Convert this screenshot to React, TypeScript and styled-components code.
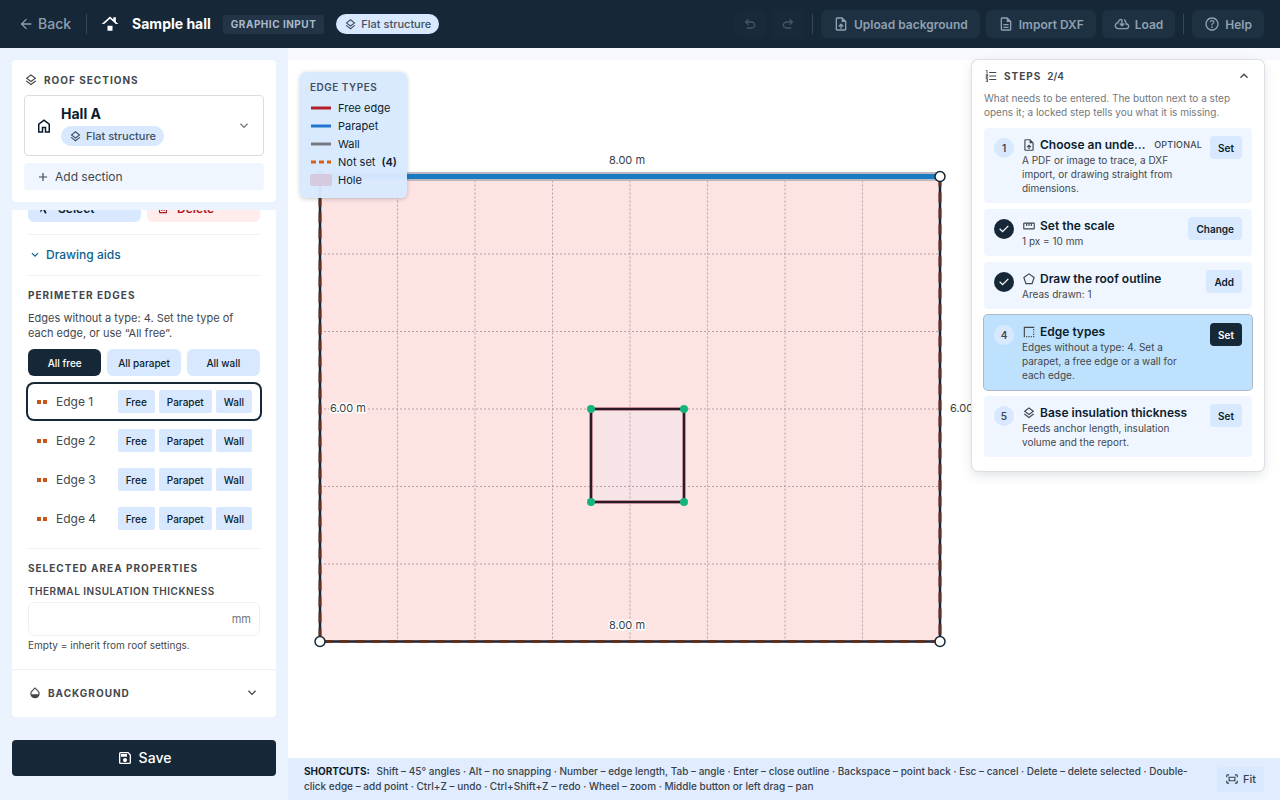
import React from "react";
import styled, { createGlobalStyle, css } from "styled-components";

const GlobalStyle = createGlobalStyle`
  *, *::before, *::after { box-sizing: border-box; }
  body {
    margin: 0;
    background: #f8f9ff;
    color: #0b1d2d;
    font-family: Inter, "Liberation Sans", sans-serif;
    font-size: 12px;
  }
  button, input { font: inherit; color: inherit; border: 0; margin: 0; }
  button { cursor: pointer; white-space: nowrap; }
  h1, h2, h3, p, ul, ol { margin: 0; padding: 0; font: inherit; list-style: none; }
`;

const DOC =
  "M240-80q-33 0-56.5-23.5T160-160v-640q0-33 23.5-56.5T240-880h320l240 240v480q0 33-23.5 56.5T720-80H240Zm280-520v-200H240v640h480v-440H520Z";

const paths = {
  back: "m313-440 224 224-57 56-320-320 320-320 57 56-224 224h487v80H313Z",
  roof: "M360-400h240v240H360v-240Zm400-188v-212H640v104L480-840 80-480h120l280-252 280 252h120L760-588Z",
  layers:
    "M480-118 120-398l66-50 294 228 294-228 66 50-360 280Zm0-202L120-600l360-280 360 280-360 280Zm0-102 230-178-230-178-230 178 230 178Z",
  undo: "M280-200v-80h284q63 0 109.5-40T720-420q0-60-46.5-100T564-560H312l104 104-56 56-200-200 200-200 56 56-104 104h252q97 0 166.5 63T800-420q0 94-69.5 157T564-200H280Z",
  redo: "M396-200q-97 0-166.5-63T160-420q0-94 69.5-157T396-640h252L544-744l56-56 200 200-200 200-56-56 104-104H396q-63 0-109.5 40T240-420q0 60 46.5 100T396-280h284v80H396Z",
  upload: "M440-200h80v-167l64 64 56-57-160-160-160 160 57 56 63-63v167Z" + DOC,
  document: "M320-240h320v-80H320v80Zm0-160h320v-80H320v80Z" + DOC,
  cloud:
    "M260-160q-91 0-155.5-63T40-377q0-78 47-139t123-78q17-72 85-137t145-65q33 0 56.5 23.5T520-716v242l64-62 56 56-160 160-160-160 56-56 64 62v-242q-76 14-118 73.5T280-520h-20q-58 0-99 41t-41 99q0 58 41 99t99 41h480q42 0 71-29t29-71q0-42-29-71t-71-29h-60v-80q0-48-22-89.5T600-680v-93q74 35 117 103.5T760-520q69 8 114.5 59.5T920-340q0 75-52.5 127.5T740-160H260Z",
  help: "M478-240q21 0 35.5-14.5T528-290q0-21-14.5-35.5T478-340q-21 0-35.5 14.5T428-290q0 21 14.5 35.5T478-240Zm-36-154h74q0-33 7.5-52t42.5-52q26-26 41-49.5t15-56.5q0-56-41-86t-97-30q-57 0-92.5 30T342-618l66 26q5-18 22.5-39t53.5-21q32 0 48 17.5t16 38.5q0 20-12 37.5T506-526q-44 39-54 59t-10 73Zm38 314q-83 0-156-31.5T197-197q-54-54-85.5-127T80-480q0-83 31.5-156T197-763q54-54 127-85.5T480-880q83 0 156 31.5T763-763q54 54 85.5 127T880-480q0 83-31.5 156T763-197q-54 54-127 85.5T480-80Zm0-80q134 0 227-93t93-227q0-134-93-227t-227-93q-134 0-227 93t-93 227q0 134 93 227t227 93Z",
  home: "M240-200h120v-240h240v240h120v-360L480-740 240-560v360Zm-80 80v-480l320-240 320 240v480H520v-240h-80v240H160Z",
  more: "M480-344 240-584l56-56 184 184 184-184 56 56-240 240Z",
  less: "M480-528 296-344l-56-56 240-240 240 240-56 56-184-184Z",
  add: "M440-440H200v-80h240v-240h80v240h240v80H520v240h-80v-240Z",
  cursor: "M551-80 406-392 240-160v-720l560 440H516l144 309-109 51Z",
  trash:
    "M280-120q-33 0-56.5-23.5T200-200v-520h-40v-80h200v-40h240v40h200v80h-40v520q0 33-23.5 56.5T680-120H280Zm400-600H280v520h400v-520ZM360-280h80v-360h-80v360Zm160 0h80v-360h-80v360Z",
  drop: "M480-120q-133 0-226.5-92T160-436q0-65 25-121.5T254-658l226-222 226 222q44 44 69 100.5T800-436q0 132-93.5 224T480-120ZM242-400h474q12-72-13.5-123T650-600L480-768 310-600q-27 26-53 77t-15 123Z",
  save: "M840-680v480q0 33-23.5 56.5T760-120H200q-33 0-56.5-23.5T120-200v-560q0-33 23.5-56.5T200-840h480l160 160Zm-80 34L646-760H200v560h560v-446ZM480-240q50 0 85-35t35-85q0-50-35-85t-85-35q-50 0-85 35t-35 85q0 50 35 85t85 35ZM240-560h360v-160H240v160Z",
  list: "M120-80v-60h100v-30h-60v-60h60v-30H120v-60h120q17 0 28.5 11.5T280-280v40q0 17-11.5 28.5T240-200q17 0 28.5 11.5T280-160v40q0 17-11.5 28.5T240-80H120Zm0-280v-110q0-17 11.5-28.5T160-510h60v-30H120v-60h120q17 0 28.5 11.5T280-560v70q0 17-11.5 28.5T240-450h-60v30h100v60H120Zm60-280v-180h-60v-60h120v240h-60Zm180 440v-80h480v80H360Zm0-240v-80h480v80H360Zm0-240v-80h480v80H360Z",
  check: "M382-240 154-468l57-57 171 171 367-367 57 57-424 424Z",
  ruler:
    "M160-240q-33 0-56.5-23.5T80-320v-320q0-33 23.5-56.5T160-720h640q33 0 56.5 23.5T880-640v320q0 33-23.5 56.5T800-240H160Zm0-80h640v-320H680v160h-80v-160h-80v160h-80v-160h-80v160h-80v-160H160v320Z",
  pentagon:
    "M298-200h364l123-369-305-213-305 213 123 369Zm-58 80L80-600l400-280 400 280-160 480H240Z",
  border:
    "M120-120v-720h720v80H200v640h-80Zm160 0v-80h80v80h-80Zm160 0v-80h80v80h-80Zm160 0v-80h80v80h-80Zm160 0v-80h80v80h-80Zm0-160v-80h80v80h-80Zm0-160v-80h80v80h-80Zm0-160v-80h80v80h-80Z",
  fit: "M800-600v-120H680v-80h120q33 0 56.5 23.5T880-720v120h-80Zm-720 0v-120q0-33 23.5-56.5T160-800h120v80H160v120H80Zm600 440v-80h120v-120h80v120q0 33-23.5 56.5T800-160H680Zm-520 0q-33 0-56.5-23.5T80-240v-120h80v120h120v80H160Zm80-160v-320h480v320H240Zm80-80h320v-160H320v160Z",
};

type IconName = keyof typeof paths;

const Svg = styled.svg`
  display: block;
  flex: none;
  fill: currentColor;
`;

function Icon({ name, size = 14 }: { name: IconName; size?: number }) {
  return (
    <Svg viewBox="0 -960 960 960" width={size} height={size} aria-hidden="true">
      <path d={paths[name]} />
    </Svg>
  );
}

const Page = styled.div`
  display: flex;
  flex-direction: column;
  height: 100vh;
  overflow: hidden;
`;

/* Top bar */

const TopBar = styled.header`
  display: flex;
  align-items: center;
  flex: none;
  height: 48px;
  padding: 0 16px;
  background: #162737;
  color: #fff;
`;

const BackLink = styled.a`
  display: flex;
  align-items: center;
  gap: 4px;
  padding: 0 2px;
  color: #8ea0b2;
  font-size: 14px;
  font-weight: 500;
  line-height: 16px;
  text-decoration: none;
`;

const Divider = styled.span<{ $gap: number }>`
  width: 1px;
  height: 20px;
  margin: 0 ${(p) => p.$gap}px;
  background: #34485b;
`;

const ProjectName = styled.h1`
  margin: 0 12px;
  font-size: 14px;
  font-weight: 700;
  line-height: 16px;
`;

const ModeTag = styled.span`
  padding: 0 8px;
  border-radius: 2px;
  background: #223446;
  color: #a9bacb;
  font-size: 10px;
  font-weight: 700;
  line-height: 19px;
  letter-spacing: 0.5px;
`;

const Pill = styled.span<{ $spaced?: boolean }>`
  display: inline-flex;
  align-items: center;
  gap: 4px;
  height: 20px;
  margin-left: ${(p) => (p.$spaced ? 12 : 0)}px;
  padding: 0 8px;
  border-radius: 10px;
  background: #d8e8fe;
  color: #41505f;
  font-size: 11px;
  font-weight: 500;
`;

const TopActions = styled.div`
  display: flex;
  align-items: center;
  gap: 6px;
  margin-left: auto;
`;

const TopButton = styled.button<{ $square?: boolean }>`
  display: flex;
  align-items: center;
  justify-content: center;
  gap: 5px;
  height: 28px;
  padding: 0 12px;
  border-radius: 6px;
  background: #1e3143;
  color: #8ea0b2;
  font-size: 12px;
  font-weight: 600;
  ${(p) =>
    p.$square &&
    css`
      width: 32px;
      padding: 0;
      background: #182a3a;
      color: #43566a;
    `}
`;

/* Sidebar */

const Body = styled.div`
  display: flex;
  flex: 1;
  min-height: 0;
`;

const Sidebar = styled.aside`
  display: flex;
  flex-direction: column;
  flex: none;
  width: 288px;
  padding: 12px 12px 24px;
  background: #ebf3fe;
`;

const SectionsCard = styled.section`
  display: flex;
  flex-direction: column;
  flex: none;
  gap: 7px;
  margin-bottom: 8px;
  padding: 12px;
  border-radius: 4px;
  background: #fff;
`;

const CardTitle = styled.h2`
  display: flex;
  align-items: center;
  gap: 6px;
  height: 16px;
  color: #43474c;
  font-size: 10px;
  font-weight: 700;
  line-height: 14px;
  letter-spacing: 1px;
`;

const SectionSelect = styled.button`
  display: flex;
  align-items: center;
  gap: 8px;
  height: 61px;
  padding: 0 11px 0 10px;
  border: 1px solid #d9dde2;
  border-radius: 4px;
  background: #fff;
  text-align: left;
`;

const SectionText = styled.span`
  display: flex;
  flex-direction: column;
  align-items: flex-start;
  gap: 3px;
  flex: 1;
  font-size: 14px;
  font-weight: 700;
  line-height: 18px;
`;

const Muted = styled.span`
  color: #6b737b;
`;

const AddSection = styled.button`
  display: flex;
  align-items: center;
  gap: 5px;
  height: 27px;
  padding: 0 12px;
  border-radius: 4px;
  background: #f0f6ff;
  color: #43474c;
  font-size: 12px;
`;

/* The tool panel is pinned to its end, so its first rows slide under the card above. */
const ToolPanel = styled.section`
  display: flex;
  flex-direction: column;
  justify-content: flex-end;
  flex: 0 1 auto;
  min-height: 0;
  margin-bottom: 23px;
  overflow: hidden;
  border-radius: 0 0 4px 4px;
  background: #fff;
`;

const PanelGroup = styled.div<{ $last?: boolean }>`
  display: flex;
  flex-direction: column;
  flex: none;
  margin: 0 16px;
  padding: 12px 0 ${(p) => (p.$last ? 17 : 12)}px;
  border-bottom: ${(p) => (p.$last ? 0 : 1)}px solid #f0f2f5;
`;

const ButtonRow = styled.div`
  display: flex;
  gap: 6px;
`;

const ToolButton = styled.button<{ $danger?: boolean }>`
  display: flex;
  align-items: center;
  gap: 7px;
  flex: 1;
  height: 28px;
  padding: 0 9px;
  border-radius: 6px;
  background: ${(p) => (p.$danger ? "#ffeceb" : "#d8e8fe")};
  color: ${(p) => (p.$danger ? "#ac1820" : "#0b1d2d")};
  font-size: 12px;
  font-weight: 600;
`;

const AidsToggle = styled.button`
  display: flex;
  align-items: center;
  gap: 4px;
  height: 16px;
  padding: 0;
  background: none;
  color: #0b628f;
  font-size: 12px;
  font-weight: 500;
  line-height: 14px;
`;

const GroupTitle = styled.h2`
  color: #43474c;
  font-size: 10px;
  font-weight: 700;
  line-height: 15px;
  letter-spacing: 1px;
`;

const Hint = styled.p`
  margin: 8px 0;
  color: #43474c;
  font-size: 11px;
  line-height: 15px;
`;

const AllButton = styled.button<{ $active?: boolean }>`
  flex: 1;
  height: 27px;
  padding: 0;
  border-radius: 6px;
  background: ${(p) => (p.$active ? "#162737" : "#d8e8fe")};
  color: ${(p) => (p.$active ? "#fff" : "#0b1d2d")};
  font-size: 10px;
  font-weight: 500;
`;

const EdgeList = styled.ul`
  display: flex;
  flex-direction: column;
  gap: 4px;
  margin-top: 8px;
`;

const EdgeRow = styled.li<{ $active?: boolean }>`
  display: flex;
  align-items: center;
  gap: 4px;
  padding: 6px 8px;
  border-radius: 6px;
  color: #43474c;
  font-size: 12px;
  ${(p) => p.$active && "box-shadow: 0 0 0 2px #162737;"}
`;

const EdgeName = styled.span`
  flex: 1;
  padding-left: 4px;
`;

const EdgeChip = styled.button`
  height: 23px;
  padding: 0 8px;
  border-radius: 2px;
  background: #d8e8fe;
  color: #0b1d2d;
  font-size: 10px;
  font-weight: 500;
`;

const FieldLabel = styled.label`
  margin-top: 8px;
  color: #43474c;
  font-size: 10px;
  font-weight: 600;
  line-height: 15px;
  letter-spacing: 0.5px;
`;

const Field = styled.div`
  display: flex;
  align-items: center;
  height: 34px;
  margin-top: 3px;
  padding: 0 8px;
  border: 1px solid #eef0f4;
  border-radius: 6px;
  color: #6f767d;
  font-size: 11px;
`;

const FieldInput = styled.input`
  flex: 1;
  min-width: 0;
  background: none;
  outline: none;
`;

const SmallNote = styled.p`
  margin-top: 2px;
  color: #43474c;
  font-size: 10px;
  line-height: 14px;
`;

const BackgroundToggle = styled.button`
  display: flex;
  align-items: center;
  justify-content: space-between;
  flex: none;
  height: 48px;
  padding: 0 16px 2px;
  border-top: 1px solid #eaf1f6;
  background: none;
  color: #43474c;
`;

const SaveButton = styled.button`
  display: flex;
  align-items: center;
  justify-content: center;
  gap: 6px;
  flex: none;
  height: 36px;
  margin-top: auto;
  border-radius: 4px;
  background: #162737;
  color: #fff;
  font-size: 14px;
  font-weight: 500;
  line-height: 16px;
`;

/* Canvas */

const Main = styled.main`
  display: flex;
  flex-direction: column;
  flex: 1;
  min-width: 0;
  padding-top: 12px;
`;

const Canvas = styled.div`
  position: relative;
  flex: 1;
  min-height: 0;
  background: #fff;
`;

const Drawing = styled.svg`
  display: block;
  width: 100%;
  height: 100%;
  text {
    fill: #3a3e43;
    stroke: #fff;
    stroke-width: 3px;
    stroke-linejoin: round;
    paint-order: stroke;
    font-size: 11px;
  }
`;

const Legend = styled.section`
  position: absolute;
  top: 12px;
  left: 12px;
  padding: 8px 10px 9px;
  border-radius: 6px;
  background: rgba(217, 233, 254, 0.96);
  box-shadow: 0 1px 4px rgba(20, 40, 60, 0.25);
  font-size: 11px;
`;

const LegendTitle = styled.h2`
  margin-bottom: 5px;
  color: #43505e;
  font-size: 10px;
  font-weight: 600;
  line-height: 14px;
  letter-spacing: 0.5px;
`;

const LegendItem = styled.li`
  display: flex;
  align-items: center;
  gap: 6px;
  height: 18px;
  b { font-weight: 600; }
`;

const StepsPanel = styled.section`
  position: absolute;
  top: 0;
  right: 16px;
  width: 292px;
  padding: 8px 12px 14px;
  border-radius: 6px;
  background: #fff;
  box-shadow: 0 0 0 1px #dcdfe6, 0 4px 12px rgba(20, 40, 60, 0.14);
`;

const StepsToggle = styled.button`
  display: flex;
  align-items: center;
  justify-content: space-between;
  width: 100%;
  height: 16px;
  padding: 0;
  background: none;
  color: #43474c;
`;

const StepCount = styled.span`
  font-weight: 600;
  letter-spacing: 0;
`;

const StepsIntro = styled.p`
  margin: 7px 0 9px;
  color: #74787d;
  font-size: 10px;
  line-height: 14px;
`;

const StepList = styled.ol`
  display: flex;
  flex-direction: column;
  gap: 6px;
`;

const StepCard = styled.li<{ $active?: boolean }>`
  display: flex;
  align-items: flex-start;
  gap: 8px;
  padding: 8px 10px;
  border-radius: 4px;
  background: ${(p) => (p.$active ? "#bee2fd" : "#eff6ff")};
  ${(p) => p.$active && "box-shadow: 0 0 0 1px #aeb8c4;"}
`;

const StepBadge = styled.span<{ $done?: boolean }>`
  display: flex;
  align-items: center;
  justify-content: center;
  flex: none;
  width: 20px;
  height: 20px;
  margin-top: 2px;
  border-radius: 50%;
  background: ${(p) => (p.$done ? "#162737" : "#d8e8fe")};
  color: ${(p) => (p.$done ? "#fff" : "#43474c")};
  font-size: 10px;
  font-weight: 600;
`;

const StepText = styled.div`
  flex: 1;
  min-width: 0;
  color: #43474c;
  font-size: 10px;
  line-height: 14px;
`;

const StepTitle = styled.h3`
  display: flex;
  align-items: center;
  gap: 4px;
  font-size: 12px;
  font-weight: 600;
  line-height: 17px;
`;

const StepName = styled.span`
  overflow: hidden;
  color: #0b1d2d;
  text-overflow: ellipsis;
  white-space: nowrap;
`;

const Optional = styled.span`
  padding-left: 3px;
  font-size: 9px;
  font-weight: 500;
  letter-spacing: 0.2px;
`;

const StepButton = styled.button<{ $active?: boolean }>`
  flex: none;
  height: 23px;
  padding: 0 8px;
  border-radius: 4px;
  background: ${(p) => (p.$active ? "#162737" : "#d8e8fe")};
  color: ${(p) => (p.$active ? "#fff" : "#0b1d2d")};
  font-size: 10px;
  font-weight: 600;
`;

const StatusBar = styled.footer`
  display: flex;
  align-items: center;
  justify-content: space-between;
  gap: 24px;
  flex: none;
  padding: 6px 16px;
  background: #e1edff;
  color: #38424c;
`;

const Shortcuts = styled.p`
  font-size: 10px;
  font-weight: 500;
  line-height: 15px;
  b {
    margin-right: 4px;
    color: #0b1d2d;
    font-weight: 700;
  }
`;

const FitButton = styled.button`
  display: flex;
  align-items: center;
  gap: 4px;
  flex: none;
  height: 25px;
  padding: 0 8px;
  border-radius: 4px;
  background: #d8e8fe;
  font-size: 11px;
  font-weight: 500;
`;

const verticals = [109.5, 187, 264.5, 342, 419.5, 497, 574.5];
const horizontals = [194, 271.5, 349, 426.5, 504];
const corners = [
  [32, 116.5],
  [652, 116.5],
  [652, 581.5],
  [32, 581.5],
];
const holeCorners = [
  [303, 349],
  [396, 349],
  [396, 442],
  [303, 442],
];

function RoofPlan() {
  const open = "M652 116.5V581.5H32V116.5";
  return (
    <Drawing viewBox="0 0 992 698" role="img" aria-label="Roof outline, 8.00 m by 6.00 m">
      <rect x="32" y="116.5" width="620" height="465" fill="#fee3e3" />
      <rect x="303" y="349" width="93" height="93" fill="#f6e4e6" />
      <g stroke="#a08c92" strokeOpacity="0.75" strokeDasharray="2 2">
        {verticals.map((x) => (
          <path key={x} d={`M${x} 116.5V581.5`} />
        ))}
        {horizontals.map((y) => (
          <path key={y} d={`M32 ${y}H652`} />
        ))}
      </g>
      <path d="M32 116.5H652" stroke="#bcb9c0" strokeWidth="9" />
      <path d="M32 116.5H652" stroke="#1b7bc2" strokeWidth="5" />
      <path d={open} fill="none" stroke="#16253a" strokeWidth="2.5" />
      <path d={open} fill="none" stroke="#5f2f20" strokeWidth="3" strokeDasharray="10 6" />
      <rect x="303" y="349" width="93" height="93" fill="none" stroke="#e7a0a4" strokeWidth="3.6" />
      <rect x="303" y="349" width="93" height="93" fill="none" stroke="#2b1a29" strokeWidth="2.4" />
      {corners.map(([x, y]) => (
        <circle key={`${x}-${y}`} cx={x} cy={y} r="5" fill="#fff" stroke="#162737" strokeWidth="1.5" />
      ))}
      {holeCorners.map(([x, y]) => (
        <circle key={`${x}-${y}`} cx={x} cy={y} r="4" fill="#14b57c" />
      ))}
      <text x="339" y="104" textAnchor="middle">8.00 m</text>
      <text x="339" y="569" textAnchor="middle">8.00 m</text>
      <text x="42" y="352">6.00 m</text>
      <text x="662" y="352">6.00 m</text>
    </Drawing>
  );
}

function Swatch({ color, dash }: { color: string; dash?: string }) {
  return (
    <svg width="22" height="12" aria-hidden="true">
      <path d="M1 6H21" stroke={color} strokeWidth="3" strokeDasharray={dash} />
    </svg>
  );
}

type Step = {
  icon: IconName;
  name: string;
  text: string;
  action: string;
  done?: boolean;
  active?: boolean;
  optional?: boolean;
};

const steps: Step[] = [
  {
    icon: "upload",
    name: "Choose an underlay",
    text: "A PDF or image to trace, a DXF import, or drawing straight from dimensions.",
    action: "Set",
    optional: true,
  },
  { icon: "ruler", name: "Set the scale", text: "1 px = 10 mm", action: "Change", done: true },
  { icon: "pentagon", name: "Draw the roof outline", text: "Areas drawn: 1", action: "Add", done: true },
  {
    icon: "border",
    name: "Edge types",
    text: "Edges without a type: 4. Set a parapet, a free edge or a wall for each edge.",
    action: "Set",
    active: true,
  },
  {
    icon: "layers",
    name: "Base insulation thickness",
    text: "Feeds anchor length, insulation volume and the report.",
    action: "Set",
  },
];

export default function App() {
  return (
    <Page>
      <GlobalStyle />
      <TopBar>
        <BackLink href="#back">
          <Icon name="back" size={16} />
          Back
        </BackLink>
        <Divider $gap={13} />
        <Icon name="roof" size={20} />
        <ProjectName>Sample hall</ProjectName>
        <ModeTag>GRAPHIC INPUT</ModeTag>
        <Pill $spaced>
          <Icon name="layers" size={13} />
          Flat structure
        </Pill>
        <TopActions>
          <TopButton $square disabled aria-label="Undo">
            <Icon name="undo" size={16} />
          </TopButton>
          <TopButton $square disabled aria-label="Redo">
            <Icon name="redo" size={16} />
          </TopButton>
          <Divider $gap={2} />
          <TopButton>
            <Icon name="upload" size={16} />
            Upload background
          </TopButton>
          <TopButton>
            <Icon name="document" size={16} />
            Import DXF
          </TopButton>
          <TopButton>
            <Icon name="cloud" size={16} />
            Load
          </TopButton>
          <Divider $gap={2} />
          <TopButton>
            <Icon name="help" size={16} />
            Help
          </TopButton>
        </TopActions>
      </TopBar>

      <Body>
        <Sidebar>
          <SectionsCard>
            <CardTitle>
              <Icon name="layers" />
              ROOF SECTIONS
            </CardTitle>
            <SectionSelect>
              <Icon name="home" size={18} />
              <SectionText>
                Hall A
                <Pill>
                  <Icon name="layers" size={13} />
                  Flat structure
                </Pill>
              </SectionText>
              <Muted>
                <Icon name="more" size={16} />
              </Muted>
            </SectionSelect>
            <AddSection>
              <Icon name="add" />
              Add section
            </AddSection>
          </SectionsCard>

          <ToolPanel>
            <PanelGroup>
              <ButtonRow>
                <ToolButton>
                  <Icon name="cursor" />
                  Select
                </ToolButton>
                <ToolButton $danger>
                  <Icon name="trash" />
                  Delete
                </ToolButton>
              </ButtonRow>
            </PanelGroup>
            <PanelGroup>
              <AidsToggle>
                <Icon name="more" />
                Drawing aids
              </AidsToggle>
            </PanelGroup>
            <PanelGroup>
              <GroupTitle>PERIMETER EDGES</GroupTitle>
              <Hint>Edges without a type: 4. Set the type of each edge, or use “All free”.</Hint>
              <ButtonRow>
                <AllButton $active>All free</AllButton>
                <AllButton>All parapet</AllButton>
                <AllButton>All wall</AllButton>
              </ButtonRow>
              <EdgeList>
                {[1, 2, 3, 4].map((n) => (
                  <EdgeRow key={n} $active={n === 1}>
                    <svg width="12" height="4" aria-hidden="true">
                      <path d="M1 2H11" stroke="#c75518" strokeWidth="4" strokeDasharray="4 2" />
                    </svg>
                    <EdgeName>Edge {n}</EdgeName>
                    <EdgeChip>Free</EdgeChip>
                    <EdgeChip>Parapet</EdgeChip>
                    <EdgeChip>Wall</EdgeChip>
                  </EdgeRow>
                ))}
              </EdgeList>
            </PanelGroup>
            <PanelGroup $last>
              <GroupTitle>SELECTED AREA PROPERTIES</GroupTitle>
              <FieldLabel htmlFor="thickness">THERMAL INSULATION THICKNESS</FieldLabel>
              <Field>
                <FieldInput id="thickness" />
                mm
              </Field>
              <SmallNote>Empty = inherit from roof settings.</SmallNote>
            </PanelGroup>
            <BackgroundToggle>
              <CardTitle as="span">
                <Icon name="drop" />
                BACKGROUND
              </CardTitle>
              <Icon name="more" size={16} />
            </BackgroundToggle>
          </ToolPanel>

          <SaveButton>
            <Icon name="save" size={16} />
            Save
          </SaveButton>
        </Sidebar>

        <Main>
          <Canvas>
            <RoofPlan />
            <Legend>
              <LegendTitle>EDGE TYPES</LegendTitle>
              <ul>
                <LegendItem>
                  <Swatch color="#b3202a" />
                  Free edge
                </LegendItem>
                <LegendItem>
                  <Swatch color="#2276cf" />
                  Parapet
                </LegendItem>
                <LegendItem>
                  <Swatch color="#777a80" />
                  Wall
                </LegendItem>
                <LegendItem>
                  <Swatch color="#d95f1a" dash="5 3" />
                  Not set <b>(4)</b>
                </LegendItem>
                <LegendItem>
                  <svg width="22" height="12" aria-hidden="true">
                    <rect width="22" height="12" rx="2" fill="#d5cade" />
                  </svg>
                  Hole
                </LegendItem>
              </ul>
            </Legend>
            <StepsPanel>
              <StepsToggle>
                <CardTitle as="span">
                  <Icon name="list" />
                  STEPS <StepCount>2/4</StepCount>
                </CardTitle>
                <Icon name="less" size={16} />
              </StepsToggle>
              <StepsIntro>
                What needs to be entered. The button next to a step opens it; a locked step tells you what it is missing.
              </StepsIntro>
              <StepList>
                {steps.map((step, i) => (
                  <StepCard key={step.name} $active={step.active}>
                    <StepBadge $done={step.done}>{step.done ? <Icon name="check" /> : i + 1}</StepBadge>
                    <StepText>
                      <StepTitle>
                        <Icon name={step.icon} />
                        <StepName>{step.name}</StepName>
                        {step.optional && <Optional>OPTIONAL</Optional>}
                      </StepTitle>
                      <p>{step.text}</p>
                    </StepText>
                    <StepButton $active={step.active}>{step.action}</StepButton>
                  </StepCard>
                ))}
              </StepList>
            </StepsPanel>
          </Canvas>
          <StatusBar>
            <Shortcuts>
              <b>SHORTCUTS:</b> Shift – 45° angles · Alt – no snapping · Number – edge length, Tab – angle · Enter –
              close outline · Backspace – point back · Esc – cancel · Delete – delete selected · Double-click edge –
              add point · Ctrl+Z – undo · Ctrl+Shift+Z – redo · Wheel – zoom · Middle button or left drag – pan
            </Shortcuts>
            <FitButton>
              <Icon name="fit" />
              Fit
            </FitButton>
          </StatusBar>
        </Main>
      </Body>
    </Page>
  );
}
